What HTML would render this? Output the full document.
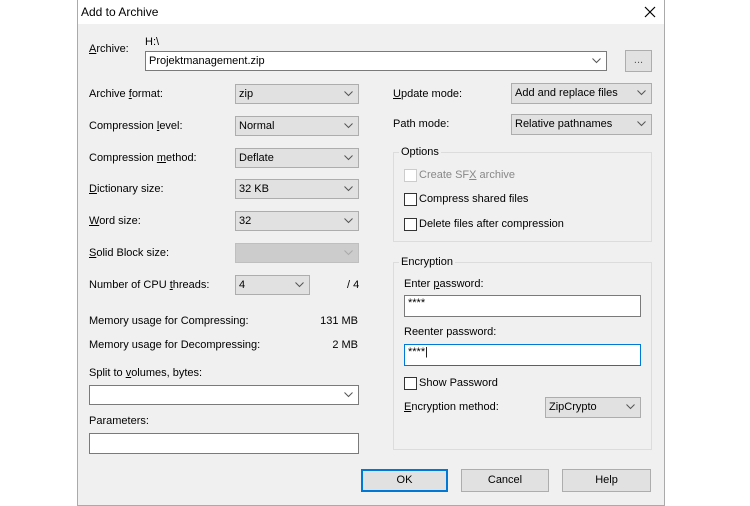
<!DOCTYPE html><html><head><style>
body{margin:0;width:750px;height:506px;background:#fff;position:relative;overflow:hidden;font-family:"Liberation Sans",sans-serif;font-size:11px;color:#000}
.a{position:absolute;white-space:nowrap}
.dlg{position:absolute;left:77px;top:0;width:586px;height:505px;background:#f0f0f0;border-left:1px solid #aaa;border-right:1px solid #aaa;border-bottom:1px solid #aaa}
.tb{position:absolute;left:78px;top:0;width:586px;height:24px;background:#fff}
.cb{position:absolute;background:#e1e1e1;border:1px solid #adadad;box-sizing:border-box;padding-left:3px;line-height:18px}
.cb.w{background:#fff;border-color:#7a7a7a}
.cb.d{background:#ccc;border-color:#bfbfbf}
.cb svg{position:absolute;right:5px;top:6px}
.ed{position:absolute;background:#fff;border:1px solid #7a7a7a;box-sizing:border-box;padding-left:3px;line-height:18px}
.ck{position:absolute;width:11px;height:11px;border:1px solid #333;background:#fff}
.gb{position:absolute;border:1px solid #dcdcdc;box-sizing:border-box}
.bt{position:absolute;background:#e1e1e1;border:1px solid #adadad;box-sizing:border-box;text-align:center;line-height:20px}
u{text-decoration:underline}
</style></head><body>
<div class="dlg"></div><div class="tb"></div>
<div class="a" style="left:81px;top:5px;font-size:12px">Add to Archive</div>
<svg class="a" style="left:644px;top:6px" width="12" height="12"><path d="M1 1L11 11M11 1L1 11" stroke="#000" stroke-width="1.2"/></svg>

<div class="a" style="left:89px;top:43px"><u>A</u>rchive:</div>
<div class="a" style="left:145px;top:36px">H:\</div>
<div class="cb w" style="left:145px;top:51px;width:462px;height:20px">Projektmanagement.zip<svg width="9" height="6"><path d="M0.5 0.5L4.5 4.5L8.5 0.5" fill="none" stroke="#555"/></svg></div>
<div class="bt" style="left:625px;top:50px;width:27px;height:22px;line-height:18px;color:#555">...</div>

<div class="a" style="left:89px;top:88px">Archive <u>f</u>ormat:</div>
<div class="cb" style="left:235px;top:84px;width:124px;height:20px">zip<svg width="9" height="6"><path d="M0.5 0.5L4.5 4.5L8.5 0.5" fill="none" stroke="#555"/></svg></div>
<div class="a" style="left:89px;top:120px">Compression <u>l</u>evel:</div>
<div class="cb" style="left:235px;top:116px;width:124px;height:20px">Normal<svg width="9" height="6"><path d="M0.5 0.5L4.5 4.5L8.5 0.5" fill="none" stroke="#555"/></svg></div>
<div class="a" style="left:89px;top:152px">Compression <u>m</u>ethod:</div>
<div class="cb" style="left:235px;top:148px;width:124px;height:20px">Deflate<svg width="9" height="6"><path d="M0.5 0.5L4.5 4.5L8.5 0.5" fill="none" stroke="#555"/></svg></div>
<div class="a" style="left:89px;top:183px"><u>D</u>ictionary size:</div>
<div class="cb" style="left:235px;top:179px;width:124px;height:20px">32 KB<svg width="9" height="6"><path d="M0.5 0.5L4.5 4.5L8.5 0.5" fill="none" stroke="#555"/></svg></div>
<div class="a" style="left:89px;top:215px"><u>W</u>ord size:</div>
<div class="cb" style="left:235px;top:211px;width:124px;height:20px">32<svg width="9" height="6"><path d="M0.5 0.5L4.5 4.5L8.5 0.5" fill="none" stroke="#555"/></svg></div>
<div class="a" style="left:89px;top:247px"><u>S</u>olid Block size:</div>
<div class="cb d" style="left:235px;top:243px;width:124px;height:20px"><svg width="9" height="6"><path d="M0.5 0.5L4.5 4.5L8.5 0.5" fill="none" stroke="#aaa"/></svg></div>
<div class="a" style="left:89px;top:279px">Number of CPU <u>t</u>hreads:</div>
<div class="cb" style="left:235px;top:275px;width:75px;height:20px">4<svg width="9" height="6"><path d="M0.5 0.5L4.5 4.5L8.5 0.5" fill="none" stroke="#555"/></svg></div>
<div class="a" style="left:347px;top:279px">/ 4</div>
<div class="a" style="left:89px;top:315px">Memory usage for Compressing:</div>
<div class="a" style="left:300px;top:315px;width:58px;text-align:right">131 MB</div>
<div class="a" style="left:89px;top:339px">Memory usage for Decompressing:</div>
<div class="a" style="left:300px;top:339px;width:58px;text-align:right">2 MB</div>
<div class="a" style="left:89px;top:367px">Split to <u>v</u>olumes, bytes:</div>
<div class="cb w" style="left:89px;top:385px;width:270px;height:20px"><svg width="9" height="6"><path d="M0.5 0.5L4.5 4.5L8.5 0.5" fill="none" stroke="#555"/></svg></div>
<div class="a" style="left:89px;top:415px">Parameters:</div>
<div class="ed" style="left:89px;top:433px;width:270px;height:21px"></div>

<div class="a" style="left:393px;top:88px"><u>U</u>pdate mode:</div>
<div class="cb" style="left:511px;top:83px;width:141px;height:21px">Add and replace files<svg width="9" height="6"><path d="M0.5 0.5L4.5 4.5L8.5 0.5" fill="none" stroke="#555"/></svg></div>
<div class="a" style="left:393px;top:118px">Path mode:</div>
<div class="cb" style="left:511px;top:114px;width:141px;height:21px">Relative pathnames<svg width="9" height="6"><path d="M0.5 0.5L4.5 4.5L8.5 0.5" fill="none" stroke="#555"/></svg></div>

<div class="gb" style="left:393px;top:152px;width:259px;height:90px"></div>
<div class="a" style="left:399px;top:146px;background:#f0f0f0;padding:0 2px">Options</div>
<div class="ck" style="left:404px;top:169px;border-color:#ccc"></div>
<div class="a" style="left:419px;top:169px;color:#888">Create SF<u>X</u> archive</div>
<div class="ck" style="left:404px;top:193px"></div>
<div class="a" style="left:419px;top:193px">Compress shared files</div>
<div class="ck" style="left:404px;top:218px"></div>
<div class="a" style="left:419px;top:218px">Delete files after compression</div>

<div class="gb" style="left:393px;top:262px;width:259px;height:188px"></div>
<div class="a" style="left:399px;top:256px;background:#f0f0f0;padding:0 2px">Encryption</div>
<div class="a" style="left:404px;top:278px">Enter <u>p</u>assword:</div>
<div class="ed" style="left:404px;top:295px;width:237px;height:22px;line-height:14px">****</div>
<div class="a" style="left:404px;top:326px">Reenter password:</div>
<div class="ed" style="left:404px;top:344px;width:237px;height:22px;line-height:14px;border-color:#0078d7">****|</div>
<div class="ck" style="left:404px;top:377px"></div>
<div class="a" style="left:419px;top:377px">Show Password</div>
<div class="a" style="left:404px;top:401px"><u>E</u>ncryption method:</div>
<div class="cb" style="left:545px;top:397px;width:96px;height:21px">ZipCrypto<svg width="9" height="6"><path d="M0.5 0.5L4.5 4.5L8.5 0.5" fill="none" stroke="#555"/></svg></div>

<div class="bt" style="left:361px;top:469px;width:87px;height:23px;border:2px solid #0078d7;line-height:19px">OK</div>
<div class="bt" style="left:461px;top:469px;width:88px;height:23px">Cancel</div>
<div class="bt" style="left:562px;top:469px;width:89px;height:23px">Help</div>
</body></html>
